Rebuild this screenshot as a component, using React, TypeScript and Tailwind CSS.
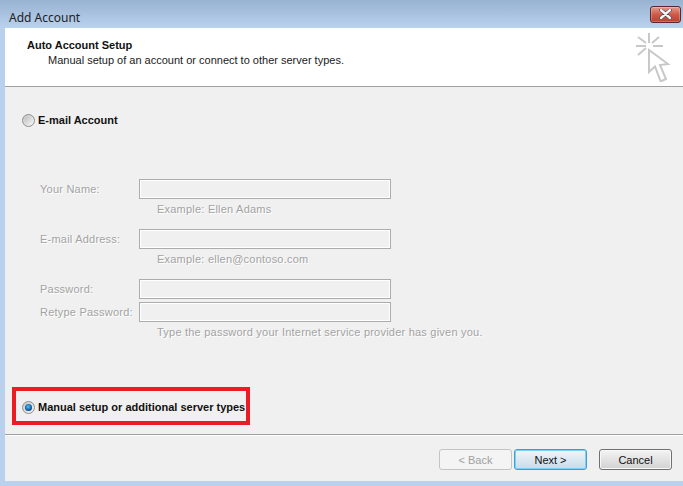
function Radio({ checked }: { checked?: boolean }) {
  return (
    <svg width="13" height="13" viewBox="0 0 13 13" className="shrink-0">
      <defs>
        <linearGradient id="rg" x1="0" y1="0" x2="1" y2="1">
          <stop offset="0" stopColor="#c4c4c4" />
          <stop offset="1" stopColor="#f8f8f8" />
        </linearGradient>
        <linearGradient id="ru" x1="0" y1="0" x2="1" y2="1">
          <stop offset="0" stopColor="#c0c0c0" />
          <stop offset="1" stopColor="#f2f2f2" />
        </linearGradient>
        <radialGradient id="rb" cx="0.45" cy="0.4" r="0.6">
          <stop offset="0" stopColor="#5fc4f0" />
          <stop offset="0.6" stopColor="#1a74b8" />
          <stop offset="1" stopColor="#0e3f78" />
        </radialGradient>
      </defs>
      <circle cx="6.5" cy="6.5" r="6" fill="url(#rg)" stroke="#8e8f8f" />
      {checked ? (
        <circle cx="6.5" cy="6.5" r="3.5" fill="url(#rb)" />
      ) : (
        <circle cx="6.5" cy="6.5" r="4" fill="url(#ru)" />
      )}
    </svg>
  );
}

function Field({ label, top, hint }: { label: string; top: string; hint?: string }) {
  return (
    <>
      <div className={`flex items-center ${top}`}>
        <span className="w-[99px] whitespace-nowrap text-[#a3a3a3] tracking-[0.22px] [text-shadow:1px_1px_0_#fff]">{label}</span>
        <div className="w-[252px] h-[20px] border border-[#acacac] bg-[#f0f0f0] shadow-[inset_0_0_0_1px_#fff]" />
      </div>
      {hint && (
        <div className="pl-[117px] mt-[1px] h-[18px] leading-[18px] whitespace-nowrap text-[#a3a3a3] tracking-[0.22px] [text-shadow:1px_1px_0_#fff]">
          {hint}
        </div>
      )}
    </>
  );
}

export default function App() {
  return (
    <div
      className="relative w-[683px] h-[486px] overflow-hidden bg-[#b9d1ec] text-[11px] leading-[16px] text-[#111]"
      style={{ fontFamily: '"Liberation Sans", Arial, sans-serif' }}
    >
      <div className="h-[28px] flex items-center justify-between pl-[9px] pr-[2px] pt-[5px] bg-gradient-to-b from-[#98b2d1] to-[#b9d2ee]">
        <span className="text-[#222] text-[12px] font-['Noto_Sans'] mt-[2px]">Add Account</span>
        <div className="w-[31px] h-[17px] mb-[5px] rounded-[3px] border border-[#5b2630] bg-gradient-to-b from-[#e59a8c] via-[#cf5a48] to-[#b8402f] flex items-center justify-center shadow-[inset_0_0_0_1px_rgba(255,255,255,0.25)]">
          <svg width="13" height="10" viewBox="0 0 13 10">
            <path d="M2 1 L11 9 M11 1 L2 9" stroke="#3d3d4d" strokeWidth="3.6" strokeLinecap="round" />
            <path d="M2 1 L11 9 M11 1 L2 9" stroke="#f4f4f6" strokeWidth="2.4" strokeLinecap="round" />
          </svg>
        </div>
      </div>

      <div className="ml-[5px] w-[678px] h-[453px] bg-[#f0f0f0] flex flex-col">
        <div className="h-[59px] bg-white flex justify-between border-b border-[#a0a0a0] shrink-0">
          <div className="pl-[22px] pt-[9px]">
            <div className="font-bold text-[#111] leading-[17px]">Auto Account Setup</div>
            <div className="pl-[21px] leading-[13px] text-[#1a1a1a]">Manual setup of an account or connect to other server types.</div>
          </div>
          <svg width="38" height="50" viewBox="0 0 38 50" className="mr-[10px] mt-[4px]" fill="none">
            <g stroke="#c8c8c8" strokeWidth="2">
              <path d="M14 1 L14 11" />
              <path d="M1 14 L11 14 M18 14 L28 14" />
              <path d="M3 5 L11 11 M24 5 L17 11 M3 23 L11 16" />
            </g>
            <path d="M14 18 L14 40 L20 34.5 L25.7 49.5 L31 47 L25 33 L33 32 Z" fill="#fff" stroke="#c8c8c8" strokeWidth="2" strokeLinejoin="miter" />
          </svg>
        </div>

        <div className="flex-1 pl-[17px] pt-[25px]">
          <div className="flex items-center gap-[3px] h-[16px] font-bold text-[#111]">
            <Radio />
            <span>E-mail Account</span>
          </div>

          <div className="pl-[18px] mt-[51px]">
            <Field label="Your Name:" top="" hint="Example: Ellen Adams" />
            <Field label="E-mail Address:" top="mt-[11px]" hint="Example: ellen@contoso.com" />
            <Field label="Password:" top="mt-[11px]" />
            <Field label="Retype Password:" top="mt-[3px]" hint="Type the password your Internet service provider has given you." />
          </div>

          <div className="flex items-center gap-[3px] h-[16px] font-bold text-[#111] mt-[58px]">
            <Radio checked />
            <span>Manual setup or additional server types</span>
          </div>
        </div>

        <div className="h-[47px] border-t border-[#a0a0a0] shadow-[inset_0_1px_0_#fff] flex items-start justify-end pr-[11px] pt-[14px] shrink-0">
          <button className="w-[73px] h-[21px] rounded-[3px] border border-[#c4c4c4] bg-[#f4f4f4] text-[#a0a0a0]">&lt; Back</button>
          <button className="ml-[2px] w-[73px] h-[21px] rounded-[3px] border border-[#3c9fd0] bg-gradient-to-b from-[#eef6fb] to-[#c9dbe8] text-[#111] shadow-[inset_0_0_0_1px_#7fd0f2]">Next &gt;</button>
          <button className="ml-[12px] w-[73px] h-[21px] rounded-[3px] border border-[#707070] bg-gradient-to-b from-[#f4f4f4] to-[#d2d2d2] text-[#111] shadow-[inset_0_0_0_1px_#f8f8f8]">Cancel</button>
        </div>
      </div>

      <div className="absolute left-[12px] top-[387px] w-[238px] h-[38px] border-[4px] border-[#ed1c24]" />
    </div>
  );
}
